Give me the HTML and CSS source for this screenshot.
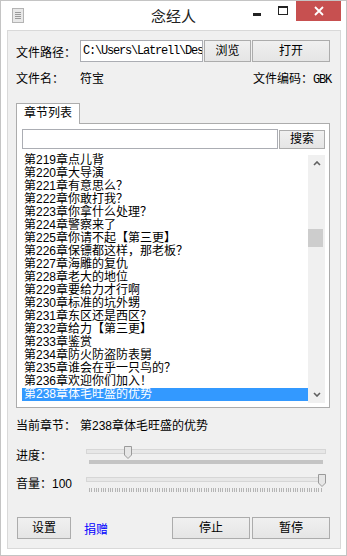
FILE: index.html
```html
<!DOCTYPE html>
<html lang="zh-CN">
<head>
<meta charset="UTF-8">
<title>念经人</title>
<link rel="stylesheet" href="styles.css">
</head>
<body>
  <div class="window">
    <div class="titlebar">
      <div class="title-left">
        <svg class="app-icon" width="12" height="15" viewBox="0 0 12 15">
          <rect x="0.5" y="0.5" width="11" height="14" fill="#e8e8e8" stroke="#b4b4b4"/>
          <rect x="3" y="4" width="6" height="1" fill="#9a9a9a"/>
          <rect x="3" y="6" width="6" height="1" fill="#9a9a9a"/>
          <rect x="3" y="8" width="6" height="1" fill="#9a9a9a"/>
          <rect x="3" y="10" width="6" height="1" fill="#9a9a9a"/>
        </svg>
      </div>
      <div class="title">念经人</div>
      <div class="controls">
        <div class="ctrl ctrl-min"><span class="min-glyph"></span></div>
        <div class="ctrl ctrl-max"><span class="max-glyph"></span></div>
        <div class="ctrl ctrl-close">
          <svg width="10" height="10" viewBox="0 0 10 10">
            <path d="M1 1 L9 9 M9 1 L1 9" stroke="#fff" stroke-width="1.8"/>
          </svg>
        </div>
      </div>
    </div>

    <div class="client">
      <!-- ruta del archivo -->
      <div class="path-row">
        <span class="label">文件路径：</span>
        <div class="textbox path-box">C:\Users\Latrell\Des</div>
        <button class="btn btn-browse">浏览</button>
        <button class="btn btn-open">打开</button>
      </div>

      <div class="info-row">
        <div><span class="label">文件名：</span><span>符宝</span></div>
        <div>文件编码：<span class="mono">GBK</span></div>
      </div>

      <!-- lista de capítulos -->
      <div class="tabs">
        <div class="tab-head">章节列表</div>
        <div class="tab-panel">
          <div class="search-row">
            <div class="textbox search-box"></div>
            <button class="btn btn-search">搜索</button>
          </div>
          <div class="listbox">
            <ul class="items">
              <li>第219章点儿背</li>
              <li>第220章大导演</li>
              <li>第221章有意思么？</li>
              <li>第222章你敢打我？</li>
              <li>第223章你拿什么处理？</li>
              <li>第224章警察来了</li>
              <li>第225章你请不起【第三更】</li>
              <li>第226章保镖都这样，那老板？</li>
              <li>第227章海雕的复仇</li>
              <li>第228章老大的地位</li>
              <li>第229章要给力才行啊</li>
              <li>第230章标准的坑外甥</li>
              <li>第231章东区还是西区？</li>
              <li>第232章给力【第三更】</li>
              <li>第233章鉴赏</li>
              <li>第234章防火防盗防表舅</li>
              <li>第235章谁会在乎一只鸟的？</li>
              <li>第236章欢迎你们加入！</li>
              <li class="selected">第238章体毛旺盛的优势</li>
            </ul>
            <div class="scrollbar">
              <div class="arrow">
                <svg width="8" height="5" viewBox="0 0 8 5"><path d="M1 4 L4 1 L7 4" fill="none" stroke="#606060" stroke-width="1.6"/></svg>
              </div>
              <div class="track"><div class="thumb"></div></div>
              <div class="arrow">
                <svg width="8" height="5" viewBox="0 0 8 5"><path d="M1 1 L4 4 L7 1" fill="none" stroke="#606060" stroke-width="1.6"/></svg>
              </div>
            </div>
          </div>
        </div>
      </div>

      <div class="current-row">
        <span class="label">当前章节：</span><span>第238章体毛旺盛的优势</span>
      </div>

      <div class="slider-row progress-row">
        <span class="label">进度：</span>
        <div class="slider">
          <div class="slider-track"></div>
          <div class="slider-bar"></div>
          <svg class="slider-thumb" style="left: 44px" width="8" height="13" viewBox="0 0 8 13">
            <path d="M0.5 0.5 H7.5 V9 L4 12.5 L0.5 9 Z" fill="#e6e6e6" stroke="#9a9a9a"/>
          </svg>
        </div>
      </div>

      <div class="slider-row volume-row">
        <span class="label">音量：100</span>
        <div class="slider">
          <div class="slider-track"></div>
          <div class="slider-ticks"></div>
          <svg class="slider-thumb" style="left: 238px" width="8" height="13" viewBox="0 0 8 13">
            <path d="M0.5 0.5 H7.5 V9 L4 12.5 L0.5 9 Z" fill="#e6e6e6" stroke="#9a9a9a"/>
          </svg>
        </div>
      </div>

      <div class="button-row">
        <button class="btn btn-settings">设置</button>
        <a class="donate" href="#">捐赠</a>
        <span class="spacer"></span>
        <button class="btn btn-stop">停止</button>
        <button class="btn btn-pause">暂停</button>
      </div>
    </div>
  </div>
</body>
</html>
```

FILE: styles.css
```css
* {
    box-sizing: border-box;
}

body {
    margin: 0;
    font-family: "Liberation Sans", "Noto Sans CJK SC", sans-serif;
    font-size: 12px;
    color: #000;
    background: #fff;
}

/* Ventana */
.window {
    width: 347px;
    height: 556px;
    border: 1px solid #c4c4c4;
    background: #fff;
    display: flex;
    flex-direction: column;
}

.titlebar {
    height: 29px;
    display: grid;
    grid-template-columns: 1fr auto 1fr;
    align-items: center;
}

.title-left {
    align-self: start;
    padding: 7px 0 0 11px;
}

.app-icon {
    display: block;
}

.title {
    font-family: "Noto Sans CJK SC", sans-serif;
    font-size: 15px;
    color: #222;
    line-height: 20px;
}

.controls {
    align-self: start;
    justify-self: end;
    display: flex;
    margin-right: 5px;
}

.ctrl {
    width: 26px;
    height: 20px;
    display: flex;
    align-items: center;
    justify-content: center;
}

.min-glyph {
    width: 8px;
    height: 3px;
    background: #222;
    margin-top: 6px;
}

.max-glyph {
    width: 10px;
    height: 9px;
    border: 1px solid #222;
    border-top-width: 2px;
    margin-top: -2px;
}

.ctrl-close {
    width: 45px;
    background: #c75050;
}

/* Área cliente */
.client {
    height: 519px;
    margin: 0 5px 0 6px;
    border: 1px solid #d9d9d9;
    background: #f0f0f0;
    padding: 0 9px 0 8px;
}

.label {
    display: inline-block;
    width: 64px;
}

.mono {
    font-family: "Liberation Mono", monospace;
    font-size: 12px;
    letter-spacing: -1.2px;
}

.textbox {
    background: #fff;
    border: 1px solid #abadb3;
}

.btn {
    font-family: "Liberation Sans", "Noto Sans CJK SC", sans-serif;
    font-size: 12px;
    color: #000;
    border: 1px solid #acacac;
    background: linear-gradient(#f0f0f0, #e5e5e5);
    padding: 0;
    margin: 0;
    line-height: 18px;
}

.path-row {
    display: flex;
    align-items: center;
    height: 22px;
    margin-top: 9px;
}

.path-box {
    width: 123px;
    height: 22px;
    padding: 3px 0 0 2px;
    font-family: "Liberation Mono", monospace;
    font-size: 12px;
    letter-spacing: -1.2px;
    white-space: nowrap;
    overflow: hidden;
}

.btn-browse {
    width: 47px;
    height: 22px;
    margin-left: 1px;
}

.btn-open {
    width: 78px;
    height: 22px;
    margin-left: 1px;
}

.info-row {
    display: flex;
    justify-content: space-between;
    height: 14px;
    line-height: 14px;
    margin-top: 10px;
}

/* Pestañas */
.tabs {
    margin-top: 17px;
    margin-right: 1px;
}

.tab-head {
    position: relative;
    z-index: 1;
    width: 64px;
    height: 21px;
    border: 1px solid #acacac;
    border-bottom: none;
    background: #fff;
    text-align: center;
    line-height: 19px;
    margin-bottom: -1px;
}

.tab-panel {
    height: 285px;
    border: 1px solid #acacac;
    background: #fff;
    padding: 5px 4px 0 5px;
}

.search-row {
    display: flex;
    height: 20px;
}

.search-box {
    flex: 1;
    height: 20px;
}

.btn-search {
    width: 46px;
    height: 19px;
    margin: 1px 0 0 1px;
    line-height: 17px;
}

.listbox {
    margin-top: 4px;
    height: 251px;
    display: grid;
    grid-template-columns: 1fr 17px;
}

.items {
    list-style: none;
    margin: 0;
    padding: 1px 0 0 0;
}

.items li {
    height: 13px;
    line-height: 13px;
    padding-left: 2px;
    white-space: nowrap;
}

.items li.selected {
    background: #3399ff;
    color: #fff;
}

.scrollbar {
    margin: 2px 0 0 0;
    height: 248px;
    background: #f0f0f0;
    display: flex;
    flex-direction: column;
}

.arrow {
    height: 17px;
    display: flex;
    align-items: center;
    justify-content: center;
}

.track {
    flex: 1;
}

.thumb {
    margin-top: 57px;
    width: 15px;
    height: 18px;
    background: #cdcdcd;
}

/* Capítulo actual y deslizadores */
.current-row {
    height: 14px;
    line-height: 14px;
    margin-top: 11px;
}

.slider-row {
    display: flex;
    align-items: center;
}

.progress-row {
    height: 21px;
    margin-top: 11px;
}

.volume-row {
    height: 20px;
    margin-top: 7px;
}

.slider {
    position: relative;
    align-self: stretch;
    width: 250px;
}

.slider-track {
    position: absolute;
    left: 6px;
    top: 5px;
    width: 240px;
    height: 5px;
    border: 1px solid #d6d6d6;
    background: #e7e7e7;
}

.slider-bar {
    position: absolute;
    left: 9px;
    top: 16px;
    width: 234px;
    height: 4px;
    background: #c4c4c4;
}

.slider-ticks {
    position: absolute;
    left: 9px;
    top: 16px;
    width: 234px;
    height: 4px;
    background: repeating-linear-gradient(90deg, #b4b4b4 0 1px, transparent 1px 2.34px);
}

.slider-thumb {
    position: absolute;
    top: 2px;
}

/* Botones inferiores */
.button-row {
    display: flex;
    align-items: center;
    height: 22px;
    margin-top: 25px;
    margin-right: 1px;
}

.btn-settings {
    width: 54px;
    height: 22px;
    margin-left: 1px;
}

.donate {
    margin-left: 13px;
    color: #0000ff;
    text-decoration: none;
}

.spacer {
    flex: 1;
}

.btn-stop,
.btn-pause {
    width: 78px;
    height: 22px;
}

.btn-pause {
    margin-left: 2px;
}
```
